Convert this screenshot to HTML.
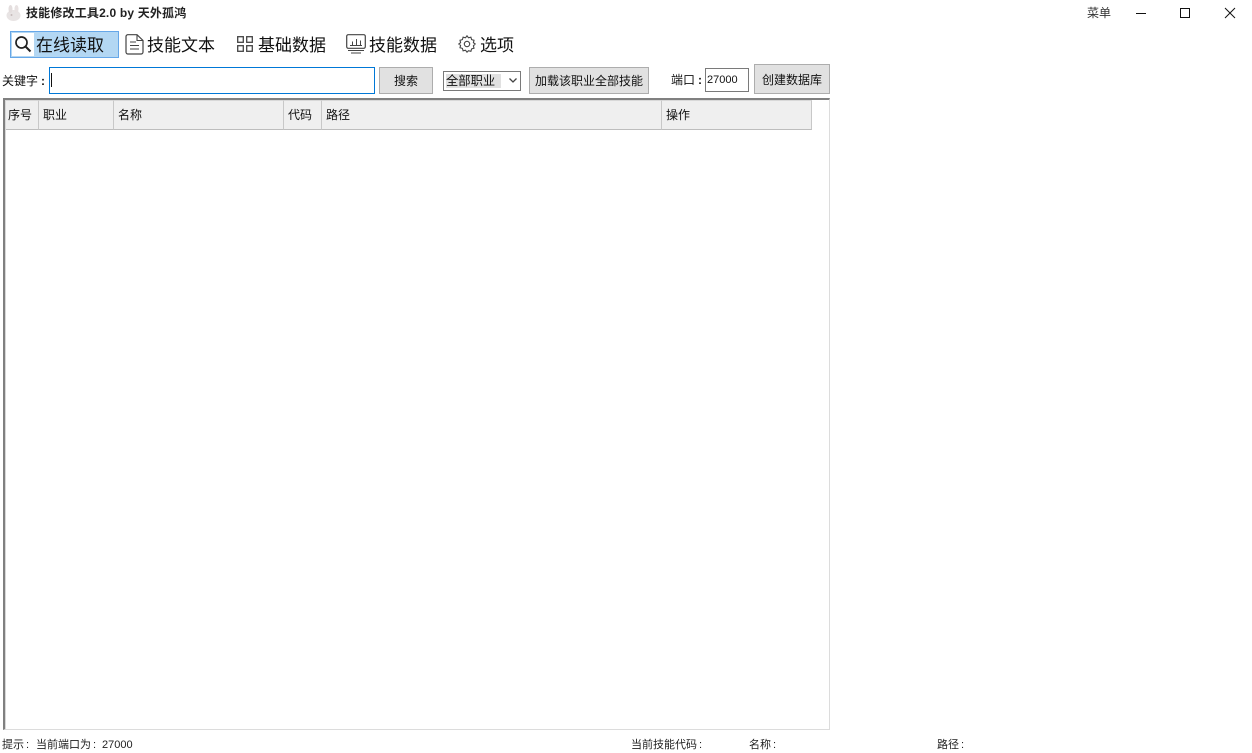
<!DOCTYPE html>
<html lang="zh"><head><meta charset="utf-8"><title>技能修改工具2.0 by 天外孤鸿</title>
<style>
html,body{margin:0;padding:0;width:1252px;height:753px;overflow:hidden;background:#fff}
body{position:relative;font-family:"Liberation Sans","Noto Sans CJK SC",sans-serif;color:#111;font-size:12px}
.a{position:absolute;box-sizing:border-box;white-space:nowrap}
.t{line-height:16px;height:16px}
.tb{font-size:17px;line-height:24px;height:24px;color:#111}
.btn{background:#e1e1e1;border:1px solid #adadad;text-align:center;font-size:12px;display:flex;align-items:center;justify-content:center}
.th{top:100px;height:30px;background:#efefef;border-top:1px solid #d8d8d8;border-right:1px solid #c8c8c8;border-bottom:1px solid #bdbdbd;padding-left:4px;line-height:28px;font-size:12px}
.c{font-weight:700;margin-left:3px}
.s{top:737px;font-size:11px;color:#222}
.s i{font-style:normal;margin-left:2px}
svg{position:absolute;overflow:visible}
</style></head><body>
<svg style="left:6px;top:5px" width="15" height="16" viewBox="0 0 15 16"><ellipse cx="7.500" cy="10.500" rx="7" ry="5.500" fill="#e8e4e4"/><ellipse cx="4.500" cy="4" rx="2" ry="4" fill="#e4dede"/><ellipse cx="10.500" cy="4" rx="2" ry="4" fill="#e8e2e2"/><circle cx="5.500" cy="10" r="1" fill="#c5baba"/></svg>
<div class="a t" style="left:26px;top:5px;font-weight:700;font-size:12px;letter-spacing:.18px;color:#222">技能修改工具2.0 by 天外孤鸿</div>
<div class="a t" style="left:1087px;top:5px;color:#333">菜单</div>
<svg style="left:1136px;top:13px" width="10" height="1"><rect width="10" height="1" fill="#111"/></svg>
<svg style="left:1180px;top:8px" width="10" height="10"><rect x=".5" y=".5" width="9" height="9" fill="none" stroke="#111"/></svg>
<svg style="left:1225px;top:8px" width="10" height="10"><path d="M0 0L10 10M10 0L0 10" stroke="#111" stroke-width="1" fill="none"/></svg>

<div class="a" style="left:10px;top:31px;width:109px;height:27px;background:#b3d7f3;border:1px solid #66a7e8"></div>
<div class="a" style="left:12px;top:33px;width:22px;height:23px;background:#fff"></div>
<svg style="left:14px;top:35px" width="18" height="18" viewBox="0 0 18 18"><circle cx="7.500" cy="7.500" r="5.500" fill="none" stroke="#222" stroke-width="1.700"/><path d="M11.500 11.500L16.500 16.500" stroke="#222" stroke-width="2"/></svg>
<div class="a tb" style="left:36px;top:34px">在线读取</div>

<svg style="left:125px;top:34px" width="19" height="21" viewBox="0 0 19 21"><path d="M2.500 .7H12L18 6.500V18a2 2 0 0 1-2 2H3a2 2 0 0 1-2-2V2.500A2 2 0 0 1 2.500 .7Z" fill="none" stroke="#444" stroke-width="1.200"/><path d="M12 1V6.500H18M5 8H11M5 11.500H14M5 15H14" fill="none" stroke="#444" stroke-width="1.100"/></svg>
<div class="a tb" style="left:147px;top:34px">技能文本</div>

<svg style="left:237px;top:36px" width="16" height="16" viewBox="0 0 16 16"><g fill="none" stroke="#444" stroke-width="1.300"><rect x=".7" y=".7" width="5.600" height="5.600"/><rect x="9.700" y=".7" width="5.600" height="5.600"/><rect x=".7" y="9.700" width="5.600" height="5.600"/><rect x="9.700" y="9.700" width="5.600" height="5.600"/></g></svg>
<div class="a tb" style="left:258px;top:34px">基础数据</div>

<svg style="left:346px;top:34px" width="20" height="20" viewBox="0 0 20 20"><rect x=".7" y=".7" width="18.600" height="13.600" rx="1.500" fill="none" stroke="#444" stroke-width="1.200"/><path d="M6.500 11V7.500M10.500 11V5M14.500 11V6.500M4 11.500H16M2 16.500H18M5 19H15" stroke="#444" stroke-width="1" fill="none"/></svg>
<div class="a tb" style="left:369px;top:34px">技能数据</div>

<svg style="left:458px;top:35px" width="18" height="18" viewBox="0 0 18 18"><path d="M9 .8l1.500 2 2.400-.6.700 2.400 2.400.7-.6 2.400 1.800 1.300-1.800 1.800.6 2.400-2.400.7-.7 2.400-2.400-.6L9 17.200l-1.500-2-2.400.6-.7-2.400-2.400-.7.6-2.400L.8 9l1.800-1.300-.6-2.400 2.400-.7.700-2.400 2.400.6Z" fill="none" stroke="#444" stroke-width="1.100"/><circle cx="9" cy="9" r="2.700" fill="none" stroke="#444" stroke-width="1.100"/></svg>
<div class="a tb" style="left:480px;top:34px">选项</div>

<div class="a t" style="left:2px;top:73px">关键字<span class="c">:</span></div>
<div class="a" style="left:49px;top:67px;width:326px;height:27px;border:1px solid #0078d7;background:#fff"></div>
<div class="a" style="left:51px;top:73px;width:1px;height:14px;background:#111"></div>
<div class="a btn" style="left:379px;top:67px;width:54px;height:27px">搜索</div>
<div class="a" style="left:443px;top:71px;width:78px;height:20px;border:1px solid #7a7a7a;background:#fff"></div>
<div class="a" style="left:446px;top:74px;width:55px;height:14px;background:#e1e1e1;font-size:12.300px;line-height:15px">全部职业</div>
<svg style="left:509px;top:78px" width="8" height="5"><path d="M.5 .5L4 4L7.500 .5" fill="none" stroke="#444" stroke-width="1.300"/></svg>
<div class="a btn" style="left:529px;top:67px;width:120px;height:27px">加载该职业全部技能</div>
<div class="a t" style="left:671px;top:72px">端口<span class="c">:</span></div>
<div class="a" style="left:705px;top:68px;width:44px;height:24px;border:1px solid #7a7a7a;background:#fff;font-size:11px;line-height:22px;padding-left:1px">27000</div>
<div class="a btn" style="left:754px;top:64px;width:76px;height:30px">创建数据库</div>

<div class="a" style="left:3px;top:98px;width:827px;height:632px;border-top:2px solid #808080;border-left:2px solid #808080;border-right:1px solid #dcdcdc;border-bottom:1px solid #dcdcdc;background:#fff"></div>
<div class="a" style="left:5px;top:100px;width:1px;height:629px;background:#d8d8d8"></div>
<div class="a th" style="left:6px;width:33px;padding-left:2px">序号</div>
<div class="a th" style="left:39px;width:75px">职业</div>
<div class="a th" style="left:114px;width:170px">名称</div>
<div class="a th" style="left:284px;width:38px">代码</div>
<div class="a th" style="left:322px;width:340px">路径</div>
<div class="a th" style="left:662px;width:150px">操作</div>

<div class="a t s" style="left:2px">提示<i>:</i></div>
<div class="a t s" style="left:36px">当前端口为<i>:</i></div>
<div class="a t s" style="left:102px">27000</div>
<div class="a t s" style="left:631px">当前技能代码<i>:</i></div>
<div class="a t s" style="left:749px">名称<i>:</i></div>
<div class="a t s" style="left:937px">路径<i>:</i></div>
</body></html>
